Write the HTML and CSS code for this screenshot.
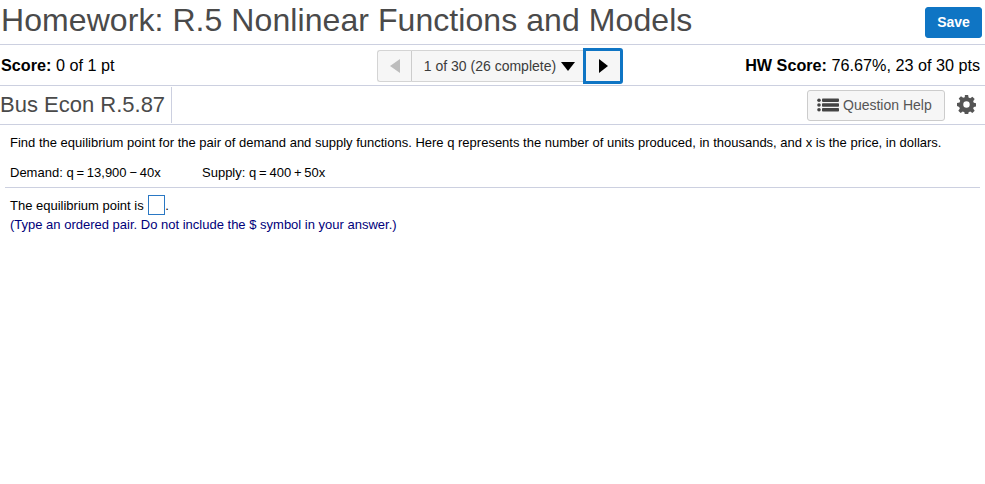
FILE: index.html
```html
<!DOCTYPE html>
<html lang="en">
<head>
<meta charset="utf-8">
<title>Homework</title>
<link rel="stylesheet" href="styles.css">
</head>
<body>
<header class="title-bar">
  <h1 class="title">Homework: R.5 Nonlinear Functions and Models</h1>
  <button class="save">Save</button>
</header>
<section class="score-bar">
  <div class="score"><b>Score:</b> 0 of 1 pt</div>
  <nav class="pager">
    <span class="pg prev"><svg width="10" height="14" viewBox="0 0 10 14"><path d="M10 0v14L0 7z" fill="#bdbdbd"/></svg></span>
    <span class="pg count">1 of 30 (26 complete)<svg class="caret" width="14" height="9" viewBox="0 0 14 9"><path d="M0 0h14L7 9z" fill="#000"/></svg></span>
    <span class="pg next"><svg width="9" height="14" viewBox="0 0 9 14"><path d="M0 0v14l9-7z" fill="#000"/></svg></span>
  </nav>
  <div class="hw"><b>HW Score:</b> 76.67%, 23 of 30 pts</div>
</section>
<section class="q-bar">
  <h2 class="q-name">Bus Econ R.5.87</h2>
  <div class="q-spacer"></div>
  <button class="help">
    <svg width="22" height="14" viewBox="0 0 22 14"><g fill="#444"><circle cx="2" cy="2.2" r="1.8"/><circle cx="2" cy="7" r="1.8"/><circle cx="2" cy="11.8" r="1.8"/><rect x="5" y="0.5" width="17" height="3.4" rx=".8"/><rect x="5" y="5.3" width="17" height="3.4" rx=".8"/><rect x="5" y="10.1" width="17" height="3.4" rx=".8"/></g></svg>
    Question Help
  </button>
  <svg class="gear" width="19" height="19" viewBox="0 0 20 20"><path fill="#555" fill-rule="evenodd" d="M8.3 0h3.4l.5 2.7 1.7.7 2.3-1.6 2.4 2.4-1.6 2.3.7 1.7 2.7.5v3.4l-2.7.5-.7 1.7 1.6 2.3-2.4 2.4-2.3-1.6-1.7.7-.5 2.7H8.3l-.5-2.7-1.7-.7-2.3 1.6-2.4-2.4 1.6-2.3-.7-1.7L0 11.7V8.3l2.7-.5.7-1.7-1.6-2.3 2.4-2.4 2.3 1.6 1.7-.7zM10 6.6a3.4 3.4 0 1 0 0 6.8 3.4 3.4 0 0 0 0-6.8z"/></svg>
</section>
<main class="question">
  <p class="intro">Find the equilibrium point for the pair of demand and supply functions. Here q represents the number of units produced, in thousands, and x is the price, in dollars.</p>
  <p class="eqs"><span class="demand">Demand: <span class="math">q = 13,900 − 40x</span></span><span>Supply: <span class="math">q = 400 + 50x</span></span></p>
  <hr class="rule">
  <p class="answer">The equilibrium point is <span class="box"></span>.</p>
  <p class="hint">(Type an ordered pair. Do not include the $ symbol in your answer.)</p>
</main>
</body>
</html>
```
FILE: styles.css
```css
* { box-sizing: border-box; }
html, body { margin: 0; padding: 0; background: #fff; }
body { font-family: "Liberation Sans", Arial, sans-serif; color: #000; width: 985px; height: 484px; overflow: hidden; }
.title-bar { height: 45px; display: flex; align-items: center; justify-content: space-between; padding: 0 3px 5px 2px; border-bottom: 1px solid #ccd0e0; }
.title { margin: 0 0 0 -1px; font-size: 32px; font-weight: 400; color: #4a4a4a; line-height: 40px; letter-spacing: .07px; }
.save { width: 57px; height: 31px; margin-top: 5px; background: #0f75c4; color: #fff; border: 1px solid #0f75c4; border-radius: 3px; font: 700 14px "Liberation Sans", Arial, sans-serif; padding: 0; }
.score-bar { height: 41px; display: grid; grid-template-columns: 376px auto 1fr; align-items: center; padding: 0 5px 0 1px; border-bottom: 1px solid #ccd0e0; font-size: 16.2px; }
.score, .hw { padding-top: 1px; }
.hw { text-align: right; }
.pager { display: flex; height: 32px; margin-top: 1px; font-size: 14px; color: #3c3c3c; }
.pg { display: flex; align-items: center; justify-content: center; background: #f6f6f6; border: 1px solid #d4d4d4; }
.prev { width: 35px; border-radius: 3px 0 0 3px; border-right-color: #ccc; }
.count { width: 172px; border-left: 0; gap: 5px; padding-left: 4px; }
.caret { margin-top: 2px; }
.next { width: 40px; height: 36px; margin: -2px 0 0 -1px; border: 3px solid #0f75c4; border-radius: 0 3px 3px 0; }
.q-bar { height: 39px; display: flex; align-items: center; padding: 0 9px 0 0; border-bottom: 1px solid #ccd0e0; }
.q-name { margin: 0; height: 36px; line-height: 36px; font-size: 22px; font-weight: 400; color: #4a4a4a; padding-right: 6px; border-right: 1px solid #ccd0e0; }
.q-spacer { flex: 1; }
.help { width: 138px; height: 31px; display: flex; align-items: center; justify-content: flex-start; gap: 4px; background: #f6f6f6; border: 1px solid #ccc; border-radius: 3px; color: #555; font: 14px "Liberation Sans", Arial, sans-serif; padding: 0 0 0 9px; margin-right: 12px; }
.gear { margin-top: -2px; }
.question { padding: 0 5px; font-size: 13px; }
.question p { margin: 0; }
.intro { padding: 10px 5px 0; line-height: 15px; }
.eqs { padding: 15px 5px 0; line-height: 15px; }
.demand { display: inline-block; width: 192px; }
.math { word-spacing: -.8px; }
.rule { border: 0; border-top: 1px solid #ccd0e0; margin: 7px 0 0; }
.answer { padding: 8px 5px 0; line-height: 20px; }
.box { display: inline-block; width: 17px; height: 20px; margin: -1px 0 0 1px; border: 1px solid #2a78c4; vertical-align: top; }
.hint { padding: 0 5px; line-height: 17px; color: #00007a; }
```
